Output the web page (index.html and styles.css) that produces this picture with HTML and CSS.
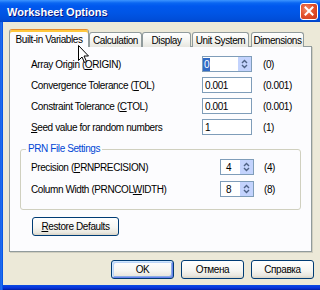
FILE: index.html
```html
<!DOCTYPE html>
<html>
<head>
<meta charset="utf-8">
<title>Worksheet Options</title>
<link rel="stylesheet" href="styles.css">
</head>
<body>
<div class="window">
  <div class="titlebar">
    <span class="title">Worksheet Options</span>
    <span class="close"><svg width="10" height="10" viewBox="0 0 10 10"><path d="M1.5 1.5L8.5 8.5M8.5 1.5L1.5 8.5" stroke="#fff" stroke-width="2" stroke-linecap="square"/></svg></span>
  </div>
  <div class="frame">
    <div class="tabs">
      <div class="tab active w-built">Built-in Variables</div>
      <div class="tab w-calc">Calculation</div>
      <div class="tab w-disp">Display</div>
      <div class="tab w-unit">Unit System</div>
      <div class="tab w-dim">Dimensions</div>
    </div>
    <div class="panel">
      <div class="fields">
        <span class="label">Array Origin (<u>O</u>RIGIN)</span>
        <div class="input spin"><span class="val first"><span class="sel">0</span></span><span class="spinbtn"><svg width="13" height="14" viewBox="0 0 13 14"><path d="M4 6L6.5 3.5L9 6M4 8L6.5 10.5L9 8" fill="none" stroke="#4D6185" stroke-width="1.4"/></svg></span></div>
        <span class="unit">(0)</span>

        <span class="label">Convergence Tolerance (<u>T</u>OL)</span>
        <div class="input"><span class="val">0.001</span></div>
        <span class="unit">(0.001)</span>

        <span class="label">Constraint Tolerance (<u>C</u>TOL)</span>
        <div class="input"><span class="val">0.001</span></div>
        <span class="unit">(0.001)</span>

        <span class="label"><u>S</u>eed value for random numbers</span>
        <div class="input"><span class="val">1</span></div>
        <span class="unit">(1)</span>
      </div>
      <fieldset class="group">
        <legend>PRN File Settings</legend>
        <div class="gfields">
          <span class="label">Precision (<u>P</u>RNPRECISION)</span>
          <div class="input spin small"><span class="val">4</span><span class="spinbtn"><svg width="13" height="14" viewBox="0 0 13 14"><path d="M4 6L6.5 3.5L9 6M4 8L6.5 10.5L9 8" fill="none" stroke="#4D6185" stroke-width="1.4"/></svg></span></div>
          <span class="unit">(4)</span>

          <span class="label">Column Width (PRNCOL<u>W</u>IDTH)</span>
          <div class="input spin small"><span class="val">8</span><span class="spinbtn"><svg width="13" height="14" viewBox="0 0 13 14"><path d="M4 6L6.5 3.5L9 6M4 8L6.5 10.5L9 8" fill="none" stroke="#4D6185" stroke-width="1.4"/></svg></span></div>
          <span class="unit">(8)</span>
        </div>
      </fieldset>
      <div class="btn restore"><u>R</u>estore Defaults</div>
    </div>
    <div class="actions">
      <div class="btn act ok">OK</div>
      <div class="btn act">Отмена</div>
      <div class="btn act">Справка</div>
    </div>
  </div>
</div>
<svg class="cursor" width="12" height="19" viewBox="0 0 12 19"><path d="M0.5 0.5V15.5L4 12L6.5 17.5L8.5 16.5L6 11H10.5Z" fill="#fff" stroke="#000" stroke-width="1"/></svg>
</body>
</html>
```
FILE: styles.css
```css
* { box-sizing: border-box; }
html, body { margin: 0; padding: 0; }
body {
  width: 320px;
  height: 290px;
  overflow: hidden;
  position: relative;
  background: #ECE9D8;
  font-family: "Liberation Sans", Arial, sans-serif;
  font-size: 10px;
  letter-spacing: -0.4px;
  color: #000;
}
.window {
  display: flex;
  flex-direction: column;
  width: 320px;
  height: 290px;
}
.titlebar {
  flex: none;
  height: 22px;
  display: flex;
  align-items: center;
  justify-content: space-between;
  padding: 0 2px 0 7px;
  background: linear-gradient(#3D95FF 0, #0A66F2 3px, #0058EE 6px, #0055E5 60%, #004ED9 88%, #0043C8 100%);
}
.title {
  color: #fff;
  font-weight: bold;
  font-size: 11px;
  letter-spacing: 0;
  text-shadow: 1px 1px 0 #0A1883;
  padding-top: 1px;
}
.close {
  width: 18px;
  height: 17px;
  border: 1px solid #fff;
  border-radius: 3px;
  background: radial-gradient(circle at 35% 35%, #F28C6A 0, #E4532D 45%, #C8351A 100%);
  display: flex;
  align-items: center;
  justify-content: center;
}
.frame {
  flex: 1;
  display: flex;
  flex-direction: column;
  padding: 8px 0 5px 9px;
  background:
    linear-gradient(to bottom, #ECE9D8 calc(100% - 5px), #0B4DE4 calc(100% - 5px), #0831D9 calc(100% - 2px), #001EA0 100%);
  position: relative;
}
.frame::before {
  content: "";
  position: absolute;
  left: 0;
  top: 0;
  bottom: 0;
  width: 3px;
  background: linear-gradient(to right, #0A48DC 0, #2F7EF5 1px, #0A5BEA 2px, #0550E0 3px);
}
.tabs {
  display: flex;
  align-items: flex-end;
  height: 17px;
  margin-bottom: -1px;
  position: relative;
  z-index: 1;
}
.tab {
  height: 15px;
  border: 1px solid #919B9C;
  border-bottom: none;
  border-radius: 3px 3px 0 0;
  background: linear-gradient(#FFFFFF, #F3F3EF 60%, #E6E5DF);
  display: flex;
  align-items: center;
  justify-content: center;
  white-space: nowrap;
  padding-top: 1px;
}
.tab.active {
  height: 18px;
  background: #FCFCFE;
  border-top: 1px solid #E68B2C;
  box-shadow: inset 0 2px 0 #FFC73C;
  padding-top: 2px;
}
.w-built { width: 80px; }
.w-calc { width: 53px; }
.w-disp { width: 49px; }
.w-unit { width: 57px; margin-left: 1px; }
.w-dim { width: 53px; margin-left: 2px; }
.panel {
  width: 303px;
  height: 206px;
  border: 1px solid #919B9C;
  background: #FCFCFE;
  display: flex;
  flex-direction: column;
  align-items: flex-start;
  padding: 9px 0 0 10px;
  box-shadow: 1px 1px 0 #D0CEBF;
}
.fields {
  display: grid;
  grid-template-columns: 171px 61px auto;
  grid-auto-rows: 16px;
  row-gap: 5px;
  align-items: center;
  margin-left: 11px;
}
.label { white-space: nowrap; }
.unit { white-space: nowrap; }
.input {
  width: 50px;
  height: 16px;
  border: 1px solid #7F9DB9;
  background: #fff;
  display: flex;
  align-items: center;
}
.val {
  flex: 1;
  padding-left: 2px;
}
.val.first { padding-left: 0; }
.sel {
  background: #316AC5;
  color: #fff;
  padding: 1px 1px 1px 1px;
}
.spinbtn {
  width: 13px;
  height: 14px;
  background: #C3D3FD;
  display: flex;
}
.input.small { width: 34px; }
.input.small .val { padding-left: 5px; }
.group {
  margin: 8px 0 0 0;
  width: 281px;
  padding: 4px 0 12px 10px;
  border: 1px solid #D0D0BF;
  border-radius: 3px;
  min-width: 0;
}
.group legend {
  color: #0046D5;
  padding: 0 2px;
  margin-left: -5px;
  line-height: 12px;
}
.gfields {
  display: grid;
  grid-template-columns: 189px 44px auto;
  grid-auto-rows: 16px;
  row-gap: 6px;
  align-items: center;
}
.btn {
  height: 19px;
  border: 1px solid #003C74;
  border-radius: 3px;
  background: linear-gradient(#FFFFFF, #F6F6F2 55%, #EAE8E0 85%, #D8D3C6 100%);
  display: flex;
  align-items: center;
  justify-content: center;
  white-space: nowrap;
}
.restore {
  width: 87px;
  margin: 7px 0 0 12px;
}
.actions {
  display: flex;
  justify-content: flex-end;
  gap: 7px;
  margin-top: 8px;
  padding-right: 6px;
}
.act { width: 63px; }
.ok {
  box-shadow: inset 1px 1px 0 #CEE7FF, inset -1px -1px 0 #6982EE, inset 2px 2px 0 #BCD4F6, inset -2px -2px 0 #89ADE4;
}
.cursor {
  position: absolute;
  left: 78px;
  top: 45px;
  z-index: 5;
}
```
